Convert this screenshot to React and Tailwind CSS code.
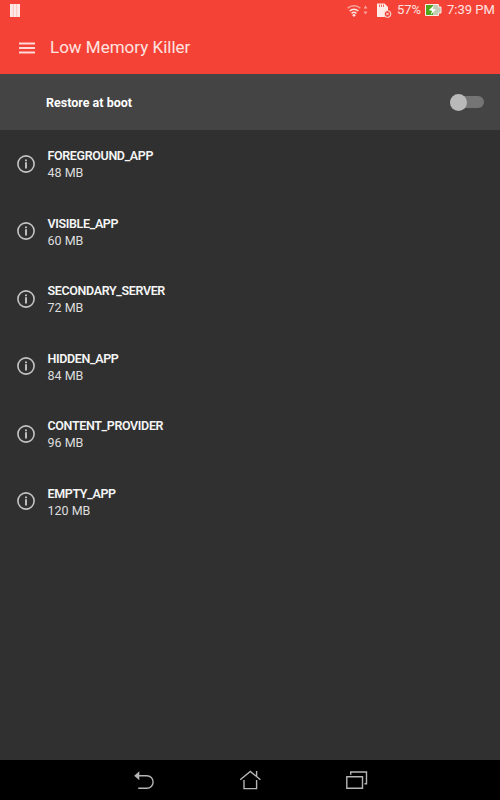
import { useState } from "react";

const levels = [
  { name: "FOREGROUND_APP", size: 48 },
  { name: "VISIBLE_APP", size: 60 },
  { name: "SECONDARY_SERVER", size: 72 },
  { name: "HIDDEN_APP", size: 84 },
  { name: "CONTENT_PROVIDER", size: 96 },
  { name: "EMPTY_APP", size: 120 },
];

function StatusBar() {
  return (
    <div className="h-5 flex items-center justify-between pl-[10px] pr-[5px] text-[#ffe3e0]">
      <svg width="10" height="13" viewBox="0 0 10 13">
        <rect width="10" height="13" fill="#ffe9e6" />
        <path d="M3.3 0v13M6.7 0v13" stroke="#fbb8b2" strokeWidth="0.8" />
      </svg>
      <div className="flex items-center">
        {/* wifi */}
        <svg width="14" height="13" viewBox="0 0 14 13" fill="none" stroke="currentColor" strokeWidth="1.5">
          <path d="M0.6 4.3a9 9 0 0 1 12.8 0" opacity="0.6" />
          <path d="M2.7 7a6 6 0 0 1 8.6 0" />
          <path d="M4.6 9.4a3.3 3.3 0 0 1 4.8 0" />
          <circle cx="7" cy="11.3" r="1.4" fill="currentColor" stroke="none" />
        </svg>
        <svg width="5" height="10" viewBox="0 0 5 10" className="ml-0.5 opacity-60" fill="currentColor">
          <path d="M2.5 0.5L4.5 3.5h-4zM2.5 9.5L4.5 6.5h-4z" />
        </svg>
        {/* sd card */}
        <svg width="15" height="15" viewBox="0 0 15 15" className="ml-[9px]">
          <path d="M0 0.5h7.5L11 4v10H0z" fill="#ffebe8" />
          <path d="M2.5 1.5v2.5M4.5 1.5v2.5M6.5 1.5v2.5" stroke="#f44336" strokeWidth="0.8" />
          <circle cx="10.5" cy="11" r="3.4" fill="#f44336" stroke="#ffebe8" />
          <path d="M9.2 9.7l2.6 2.6M11.8 9.7l-2.6 2.6" stroke="#ffebe8" />
        </svg>
        <span className="ml-[5px] w-[26px] text-[13px] whitespace-nowrap">57%</span>
        <svg width="17" height="12" viewBox="0 0 17 12" className="ml-[2px]">
          <path d="M0.5 0.5h13v2.5h2.5v6h-2.5v2.5h-13z" fill="#c3cbb4" stroke="#ffebe8" />
          <rect x="1" y="1" width="7" height="10" fill="#4fa51c" />
          <path d="M8.8 1.2L3.8 6.3l3.2.5-1.2 4 5-5.2-3-.5z" fill="#fff" />
        </svg>
        <span className="ml-[5px] w-[48px] text-[13px] whitespace-nowrap">7:39 PM</span>
      </div>
    </div>
  );
}

function InfoIcon() {
  return (
    <svg width="18" height="18" viewBox="0 0 18 18" fill="none" stroke="#c4c4c4" strokeWidth="1.6">
      <circle cx="9" cy="9" r="8.1" />
      <path d="M9 7.2v6.2M9 4.4v1.8" strokeWidth="1.9" />
    </svg>
  );
}

function Switch({ checked, onChange }) {
  return (
    <button
      role="switch"
      aria-checked={checked}
      aria-label="Restore at boot"
      onClick={() => onChange(!checked)}
      className={`flex items-center w-[34px] h-3 rounded-full bg-[#757575] ${checked ? "justify-end" : "justify-start"}`}
    >
      <span className="w-[17px] h-[17px] shrink-0 rounded-full bg-[#b9b9b9]" />
    </button>
  );
}

function NavBar() {
  return (
    <div className="h-10 bg-black flex items-center justify-center gap-[85px] text-[#b5b5b5]">
      <button aria-label="Back">
        <svg width="22" height="20" viewBox="0 0 22 20" fill="none" stroke="currentColor" strokeWidth="1.4">
          <path d="M6 5.8h8.9a6.1 6.1 0 0 1 0 12.4H6.2" />
          <path d="M7.3 1.3v9L2.2 5.8z" fill="currentColor" stroke="none" />
        </svg>
      </button>
      <button aria-label="Home">
        <svg width="22" height="20" viewBox="0 0 22 20" fill="none" stroke="currentColor" strokeWidth="1.4">
          <path d="M1.2 9.7L11.3 1.4l10.1 8.3M5 10v8.6h12.6V10M17.6 6.3V1" />
        </svg>
      </button>
      <button aria-label="Recent apps">
        <svg width="22" height="20" viewBox="0 0 22 20" fill="none" stroke="currentColor" strokeWidth="1.4">
          <path d="M0.8 6.7h15.7v11.6H0.8zM4.7 4.8V2h15.8v11.8h-2" />
        </svg>
      </button>
    </div>
  );
}

export default function App() {
  const [restore, setRestore] = useState(false);

  return (
    <div className="h-screen w-full flex flex-col overflow-hidden bg-[#303030] font-['Roboto',sans-serif]">
      <header className="h-[74px] shrink-0 bg-[#f44336]">
        <StatusBar />
        <div className="h-[54px] flex items-center pt-px pl-[19px]">
          <button aria-label="Menu">
            <svg width="16" height="12" viewBox="0 0 16 12" stroke="#ffd9d5" strokeWidth="2">
              <path d="M0 1.5h16M0 6h16M0 10.5h16" />
            </svg>
          </button>
          <h1 className="ml-[15px] text-[17px] text-[#ffe3e0]">Low Memory Killer</h1>
        </div>
      </header>

      <div className="h-14 shrink-0 flex items-center justify-between pl-[46px] pr-4 bg-[#444444]">
        <span className="pt-0.5 text-[12.5px] font-bold text-white">Restore at boot</span>
        <Switch checked={restore} onChange={setRestore} />
      </div>

      <ul className="flex-1">
        {levels.map((level) => (
          <li key={level.name} className="h-[67.5px] flex items-center pl-[17px]">
            <InfoIcon />
            <div className="ml-[12.5px] pt-px leading-[17px] text-[12.5px]">
              <p className="font-semibold tracking-[-0.36px] text-[#f5f5f5]">{level.name}</p>
              <p className="text-[#dedede]">{level.size} MB</p>
            </div>
          </li>
        ))}
      </ul>

      <NavBar />
    </div>
  );
}
